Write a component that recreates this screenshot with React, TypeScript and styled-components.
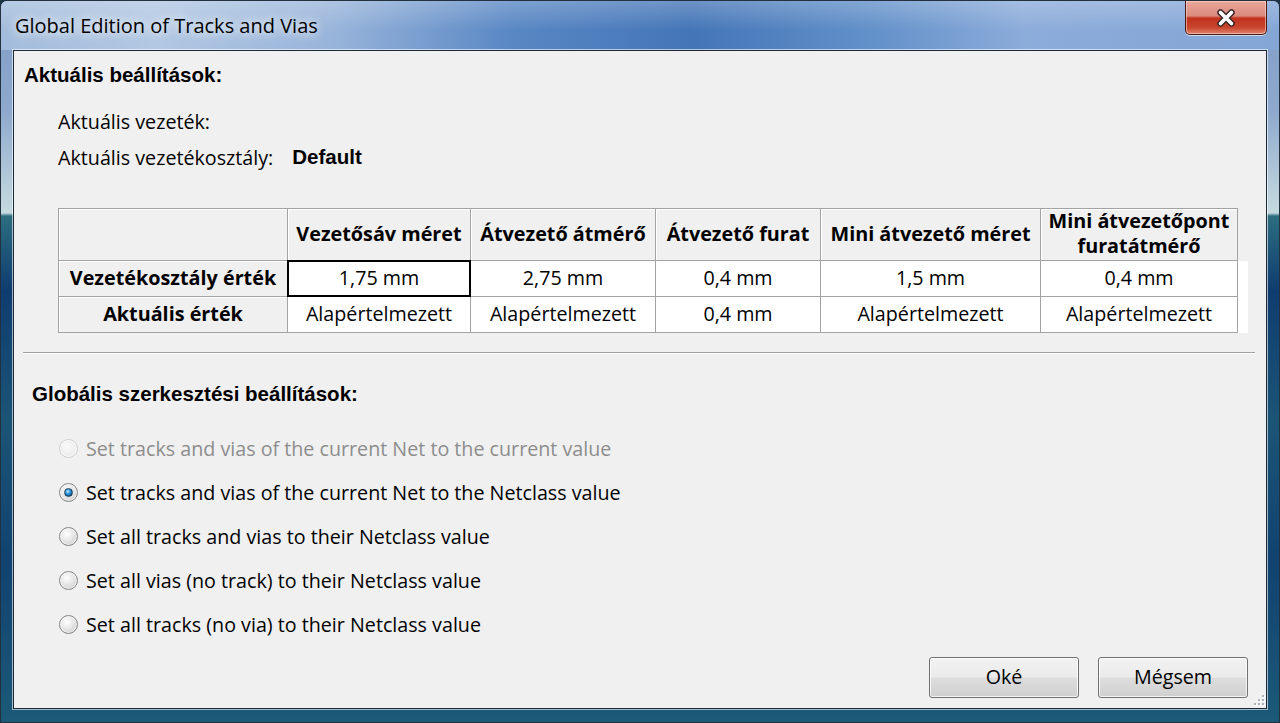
import React from 'react';
import styled, { createGlobalStyle } from 'styled-components';

const ui = `"Open Sans", "Noto Sans", sans-serif`;
const arial = `"Liberation Sans", Arial, sans-serif`;

const GlobalStyle = createGlobalStyle`
    html, body {
        margin: 0;
        padding: 0;
        width: 1280px;
        height: 723px;
        overflow: hidden;
        background: #1c3346;
    }
    #root {
        width: 1280px;
        height: 723px;
    }
`;

const columns = ['Vezetősáv méret', 'Átvezető átmérő', 'Átvezető furat', 'Mini átvezető méret', 'Mini átvezetőpont furatátmérő'];
const widths = [229, 183, 185, 165, 220, 197];
const netclassRow = ['1,75 mm', '2,75 mm', '0,4 mm', '1,5 mm', '0,4 mm'];
const currentRow = ['Alapértelmezett', 'Alapértelmezett', '0,4 mm', 'Alapértelmezett', 'Alapértelmezett'];

const options = [
    { label: 'Set tracks and vias of the current Net to the current value', disabled: true },
    { label: 'Set tracks and vias of the current Net to the Netclass value', checked: true },
    { label: 'Set all tracks and vias to their Netclass value' },
    { label: 'Set all vias (no track) to their Netclass value' },
    { label: 'Set all tracks (no via) to their Netclass value' },
];

export default function App() {
    return (
        <>
            <GlobalStyle />
            <Window>
                <TitleBar>
                    <Title>Global Edition of Tracks and Vias</Title>
                    <CloseButton>
                        <svg width="22" height="18" viewBox="0 0 22 18">
                            <path d="M5.5 3.5 L16.5 14.5 M16.5 3.5 L5.5 14.5" stroke="#3a2626" strokeWidth="6.5" strokeLinecap="round" />
                            <path d="M5.5 3.5 L16.5 14.5 M16.5 3.5 L5.5 14.5" stroke="#ffffff" strokeWidth="3.6" strokeLinecap="round" />
                        </svg>
                    </CloseButton>
                </TitleBar>

                <Client>
                    <SectionTitle>Aktuális beállítások:</SectionTitle>

                    <InfoBlock>
                        <InfoRow>Aktuális vezeték:</InfoRow>
                        <InfoRow>
                            Aktuális vezetékosztály:
                            <InfoValue>Default</InfoValue>
                        </InfoRow>
                    </InfoBlock>

                    <TableWrap>
                        <Grid style={{ gridTemplateColumns: widths.map((w) => `${w}px`).join(' ') }}>
                            <Cell $head />
                            {columns.map((c) => (
                                <Cell key={c} $head>{c}</Cell>
                            ))}

                            <Cell $head>Vezetékosztály érték</Cell>
                            {netclassRow.map((v, i) => (
                                <Cell key={i} $selected={i === 0}>{v}</Cell>
                            ))}

                            <Cell $head>Aktuális érték</Cell>
                            {currentRow.map((v, i) => (
                                <Cell key={i}>{v}</Cell>
                            ))}
                        </Grid>
                        <GridTail>
                            <TailHead />
                            <TailBody />
                        </GridTail>
                    </TableWrap>

                    <Separator />

                    <SectionTitle $sub>Globális szerkesztési beállítások:</SectionTitle>

                    <RadioList>
                        {options.map((o) => (
                            <RadioRow key={o.label} $disabled={o.disabled}>
                                <RadioMark $checked={o.checked} $disabled={o.disabled} />
                                {o.label}
                            </RadioRow>
                        ))}
                    </RadioList>

                    <ButtonRow>
                        <Button>Oké</Button>
                        <Button>Mégsem</Button>
                    </ButtonRow>

                    <Grip width="14" height="14" viewBox="0 0 14 14">
                        {[[11, 2], [11, 6], [7, 6], [11, 10], [7, 10], [3, 10]].map(([x, y]) => (
                            <g key={`${x}-${y}`}>
                                <rect x={x + 1} y={y + 1} width="2" height="2" fill="#ffffff" />
                                <rect x={x} y={y} width="2" height="2" fill="#a9b3bd" />
                            </g>
                        ))}
                    </Grip>
                </Client>
            </Window>
        </>
    );
}

const Window = styled.div`
    position: relative;
    width: 1280px;
    height: 723px;
    box-sizing: border-box;
    display: flex;
    flex-direction: column;
    border: 1px solid #23313f;
    border-radius: 7px 7px 0 0;
    overflow: hidden;
    background: linear-gradient(
        180deg,
        #7f9cc6 0px,
        #8ea9cd 110px,
        #c6dadf 212px,
        #2c6d80 215px,
        #0f3c70 290px,
        #1b5576 420px,
        #114270 560px,
        #1c5a78 723px
    );
`;

const TitleBar = styled.div`
    height: 49px;
    display: flex;
    align-items: flex-start;
    padding-left: 14px;
    background:
        linear-gradient(180deg, rgba(255, 255, 255, 0.22) 0%, rgba(255, 255, 255, 0) 60%),
        linear-gradient(
            90deg,
            #a3bcdc 0%,
            #b2c8e3 12%,
            #98b4da 26%,
            #5987c4 40%,
            #4475b7 54%,
            #6290c9 68%,
            #8cacda 80%,
            #84a6d6 100%
        );
`;

const Title = styled.div`
    margin-top: 12px;
    font-family: ${ui};
    font-size: 20px;
    line-height: 26px;
    color: #000;
    text-shadow: 0 0 8px rgba(255, 255, 255, 0.95), 0 0 14px rgba(255, 255, 255, 0.8);
`;

const CloseButton = styled.div`
    margin-left: auto;
    margin-right: 12px;
    width: 82px;
    height: 34px;
    box-sizing: border-box;
    display: flex;
    align-items: center;
    justify-content: center;
    border: 1px solid #4a1a14;
    border-top: none;
    border-radius: 0 0 5px 5px;
    background: linear-gradient(180deg, #e9a99c 0%, #d98a7c 45%, #c2321c 52%, #c8452c 80%, #e0846c 100%);
    box-shadow: inset 0 0 0 1px rgba(255, 220, 210, 0.55), 0 1px 0 rgba(255, 255, 255, 0.6);
`;

const Client = styled.div`
    position: relative;
    flex: 1;
    margin: 0 12px 13px 12px;
    box-sizing: border-box;
    display: flex;
    flex-direction: column;
    padding: 0 18px 10px 10px;
    background: #f0f0f0;
    border: 1px solid #1b2a3a;
    box-shadow: 0 0 0 1px rgba(255, 255, 255, 0.6);
`;

const SectionTitle = styled.div<{ $sub?: boolean }>`
    margin-top: ${(p) => (p.$sub ? 28 : 12)}px;
    margin-left: ${(p) => (p.$sub ? 8 : 0)}px;
    font-family: ${arial};
    font-weight: bold;
    font-size: 20.5px;
    line-height: 24px;
    color: #000;
`;

const InfoBlock = styled.div`
    margin: 22px 0 0 34px;
    display: flex;
    flex-direction: column;
    gap: 12px;
`;

const InfoRow = styled.div`
    display: flex;
    align-items: center;
    height: 24px;
    font-family: ${ui};
    font-size: 19.7px;
    color: #000;
`;

const InfoValue = styled.span`
    margin-left: 19px;
    font-family: ${arial};
    font-weight: bold;
    font-size: 20.5px;
`;

const TableWrap = styled.div`
    margin: 39px 0 0 34px;
    display: flex;
`;

const Grid = styled.div`
    display: grid;
    grid-template-rows: 52px 36px 36px;
    border-top: 1px solid #a3a3a3;
    border-left: 1px solid #a3a3a3;
`;

const Cell = styled.div<{ $head?: boolean; $selected?: boolean }>`
    position: relative;
    box-sizing: border-box;
    display: flex;
    align-items: center;
    justify-content: center;
    text-align: center;
    padding: 0 2px 3px;
    border-right: 1px solid #a3a3a3;
    border-bottom: 1px solid #a3a3a3;
    background: ${(p) => (p.$head ? '#f0f0f0' : '#ffffff')};
    box-shadow: ${(p) => (p.$head ? 'inset 1px 1px 0 #ffffff' : 'none')};
    font-family: ${ui};
    font-weight: ${(p) => (p.$head ? 'bold' : 'normal')};
    font-size: ${(p) => (p.$head ? 19.8 : 19.7)}px;
    line-height: 25px;
    color: #000;

    &::after {
        content: '';
        display: ${(p) => (p.$selected ? 'block' : 'none')};
        position: absolute;
        inset: -1px;
        border: 2px solid #000;
    }
`;

const GridTail = styled.div`
    display: flex;
    flex-direction: column;
    width: 18px;
`;

const TailHead = styled.div`
    height: 53px;
`;

const TailBody = styled.div`
    height: 72px;
    background: #ffffff;
`;

const Separator = styled.div`
    margin: 19px 0 0 -1px;
    width: 1232px;
    height: 1px;
    background: #a0a0a0;
    border-bottom: 1px solid #ffffff;
`;

const RadioList = styled.div`
    margin: 20px 0 0 35px;
    display: flex;
    flex-direction: column;
`;

const RadioRow = styled.div<{ $disabled?: boolean }>`
    height: 44px;
    display: flex;
    align-items: center;
    gap: 8px;
    font-family: ${ui};
    font-size: 19.7px;
    color: ${(p) => (p.$disabled ? '#8d8d8d' : '#000')};
`;

const RadioMark = styled.span<{ $checked?: boolean; $disabled?: boolean }>`
    position: relative;
    width: 19px;
    height: 19px;
    box-sizing: border-box;
    flex-shrink: 0;
    border-radius: 50%;
    border: 1px solid ${(p) => (p.$disabled ? '#d0d0d0' : '#858686')};
    background: ${(p) =>
        p.$disabled
            ? 'radial-gradient(circle at 40% 35%, #fafafa, #ececec 70%)'
            : 'radial-gradient(circle at 40% 35%, #ffffff, #e0e0e0 55%, #bdbdbd 100%)'};
    box-shadow: inset 0 0 0 1px rgba(255, 255, 255, 0.7);

    &::after {
        content: '';
        display: ${(p) => (p.$checked ? 'block' : 'none')};
        position: absolute;
        inset: 4px;
        border-radius: 50%;
        background: radial-gradient(circle at 40% 35%, #b6e8ff 0%, #3aa0e0 35%, #0f4f8f 75%, #0a2f5a 100%);
        border: 1px solid #1f3f5c;
        box-sizing: border-box;
    }
`;

const ButtonRow = styled.div`
    margin-top: auto;
    display: flex;
    justify-content: flex-end;
    gap: 19px;
`;

const Button = styled.div`
    width: 150px;
    height: 41px;
    box-sizing: border-box;
    display: flex;
    align-items: center;
    justify-content: center;
    padding-bottom: 2px;
    border: 1px solid #707070;
    border-radius: 3px;
    background: linear-gradient(180deg, #f2f2f2 0%, #ebebeb 48%, #dddddd 52%, #cfcfcf 100%);
    box-shadow: inset 0 0 0 1px rgba(255, 255, 255, 0.8);
    font-family: ${ui};
    font-size: 19.7px;
    color: #000;
`;

const Grip = styled.svg`
    position: absolute;
    right: 1px;
    bottom: 1px;
`;
